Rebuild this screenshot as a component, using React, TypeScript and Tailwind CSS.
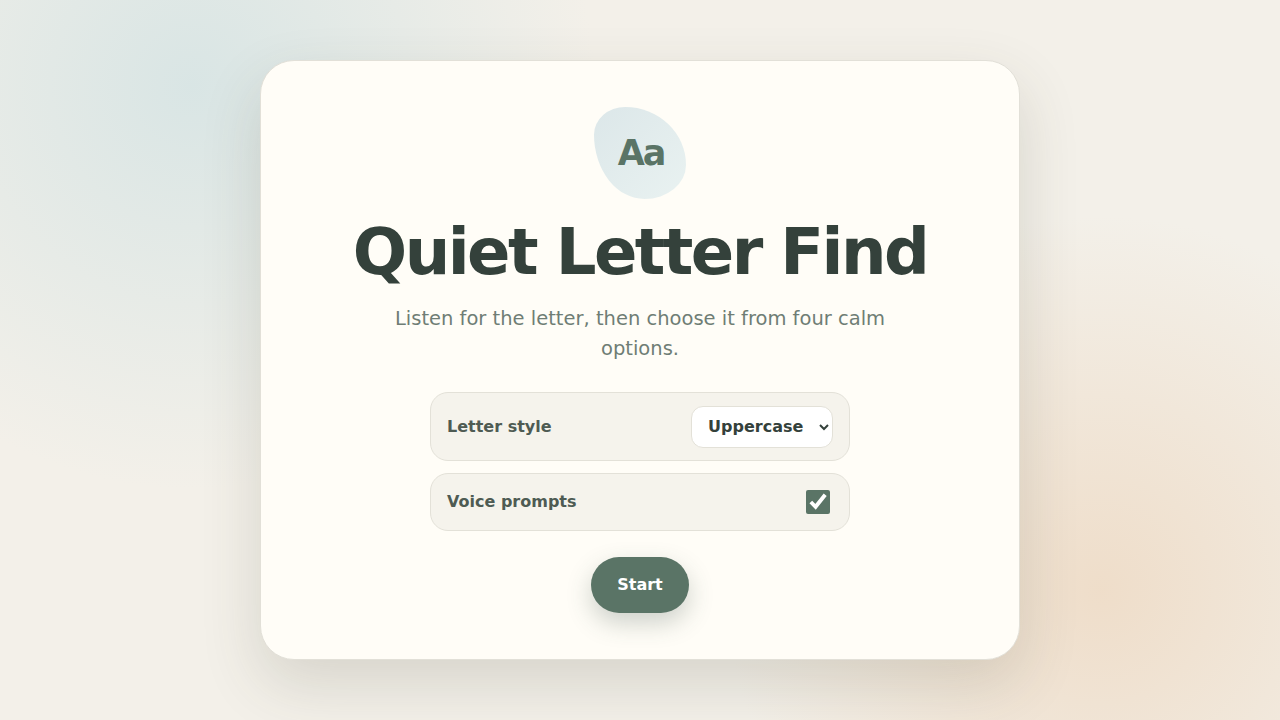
import { useState } from 'react';

export default function App() {
  const [style, setStyle] = useState('upper');
  const [voice, setVoice] = useState(true);

  return (
    <div
      className="min-h-screen w-full flex items-center justify-center bg-[#f3f0e9] text-[#34413b]"
      style={{
        fontFamily: '"DejaVu Sans", sans-serif',
        backgroundImage:
          'radial-gradient(circle at 15% 12%, rgba(214,228,228,0.9), rgba(214,228,228,0) 32%), radial-gradient(circle at 86% 82%, rgba(238,218,196,0.85), rgba(238,218,196,0) 30%)',
      }}
    >
      {/* Card */}
      <main className="w-[760px] h-[600px] bg-[#fffdf7] border border-[#e2e0d8] rounded-[34px] shadow-[0_24px_60px_rgba(70,70,50,0.16)] flex flex-col items-center pt-[46px] px-12">
        <div className="w-[92px] h-[92px] flex items-center justify-center bg-gradient-to-br from-[#dce7e9] to-[#e9f2f1] rounded-[34%_66%_45%_55%/30%_63%_37%_70%]">
          <span className="pl-[2px] text-[35px] font-bold text-[#5a7466] tracking-[-0.06em]">Aa</span>
        </div>

        <h1 className="mt-[18px] text-[64px] leading-[1.1] font-bold text-[#34413b] tracking-[-0.04em]">Quiet Letter Find</h1>

        <p className="mt-[17px] max-w-[520px] text-center text-[19.5px] leading-[30px] text-[#6f7d75]">
          Listen for the letter, then choose it from four calm options.
        </p>

        <div className="mt-[28px] w-[420px] flex flex-col gap-[12px]">
          <label className="h-[69px] flex items-center justify-between px-4 bg-[#f5f3ec] border border-[#e3e1d8] rounded-[18px]">
            <span className="text-base font-bold text-[#4e5b53]">Letter style</span>
            <select
              value={style}
              onChange={e => setStyle(e.target.value)}
              className="h-[42px] w-[142px] pl-3 pr-1 bg-white border border-[#e3e1d8] rounded-[12px] text-base font-bold text-[#34413b]"
            >
              <option value="upper">Uppercase</option>
              <option value="lower">Lowercase</option>
            </select>
          </label>

          <label className="h-[58px] flex items-center justify-between pl-4 pr-[19px] bg-[#f5f3ec] border border-[#e3e1d8] rounded-[18px]">
            <span className="text-base font-bold text-[#4e5b53]">Voice prompts</span>
            <input
              type="checkbox"
              checked={voice}
              onChange={e => setVoice(e.target.checked)}
              className="w-6 h-6 accent-[#5a7466]"
            />
          </label>
        </div>

        <button className="mt-[26px] w-[98px] h-[56px] rounded-full bg-[#5a7466] text-white text-base font-bold shadow-[0_10px_24px_rgba(60,80,70,0.25)]">
          Start
        </button>
      </main>
    </div>
  );
}
